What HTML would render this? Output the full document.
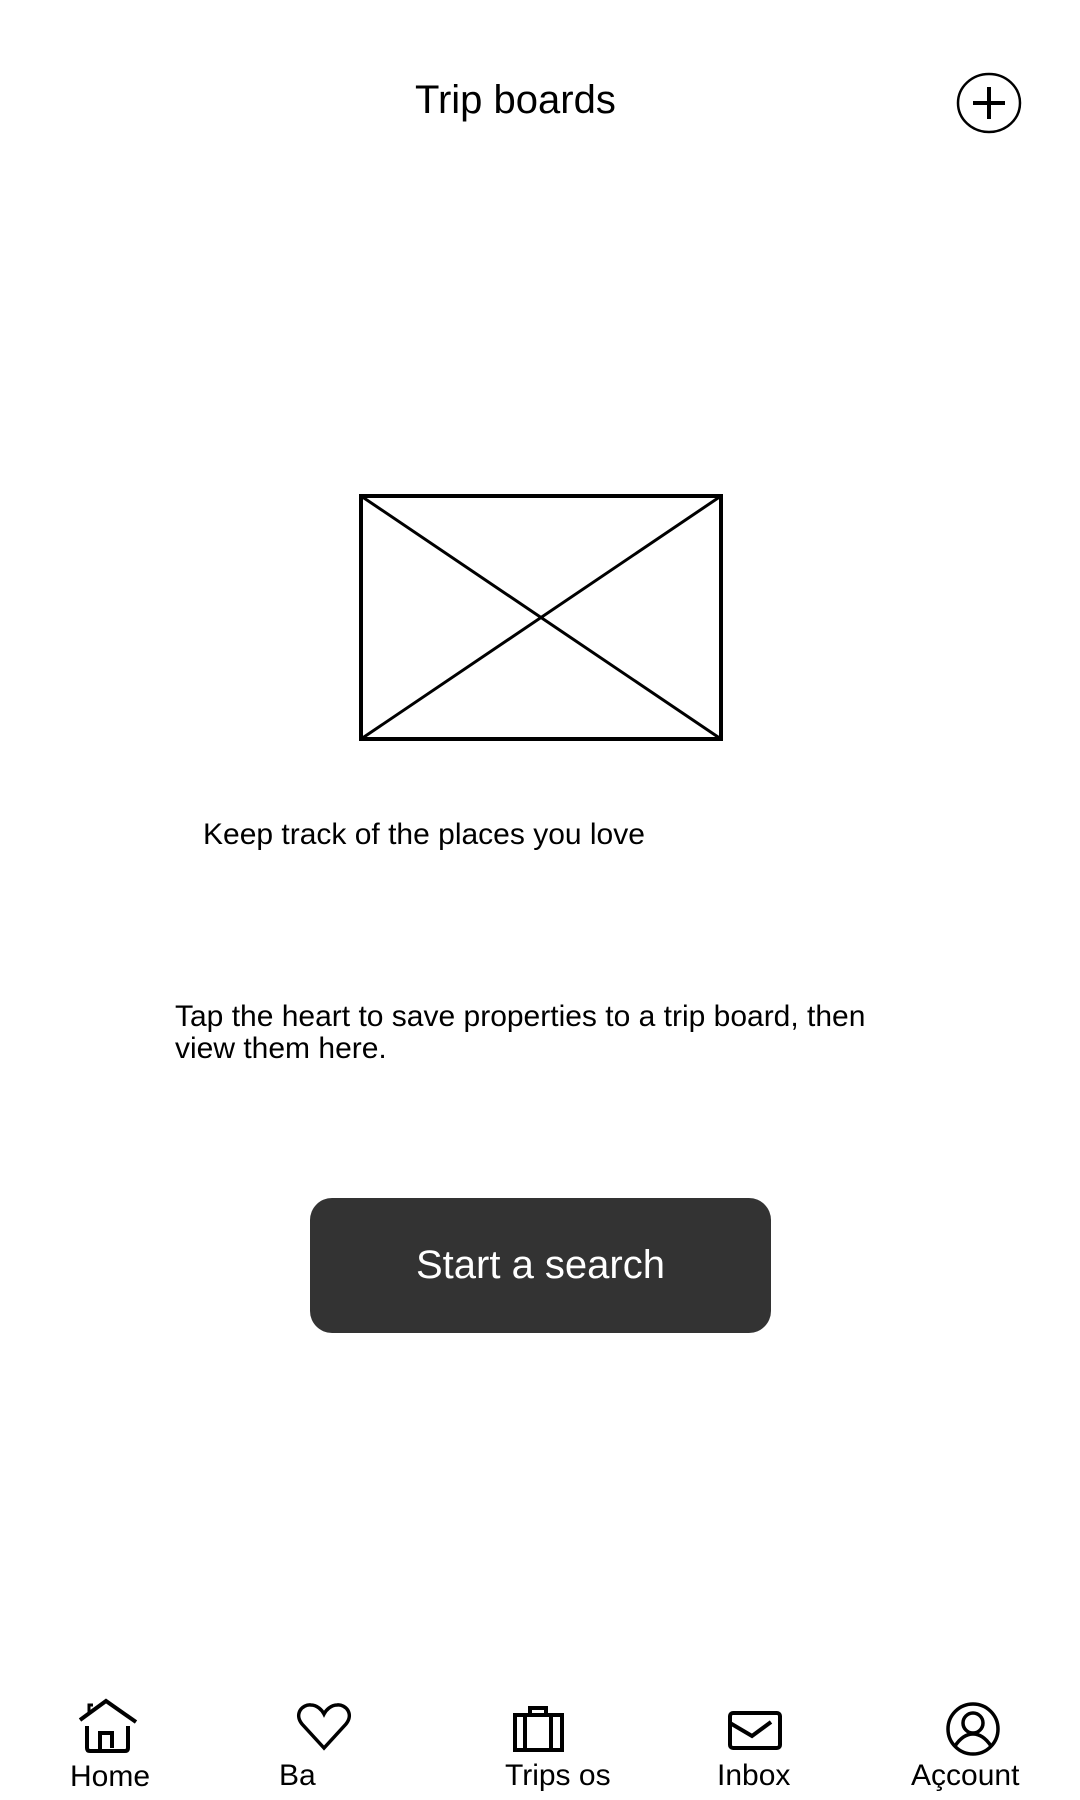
<!DOCTYPE html>
<html><head><meta charset="utf-8"><style>
html,body{margin:0;padding:0;background:#fff;}
body{width:1080px;height:1800px;position:relative;overflow:hidden;font-family:"Liberation Sans",sans-serif;color:#000;}
.t{position:absolute;white-space:nowrap;line-height:1;}
svg{position:absolute;}
</style></head><body>
<div class="t" style="left:415px;top:80px;font-size:40px;">Trip boards</div>
<svg style="left:955px;top:71px" width="68" height="64" viewBox="0 0 68 64"><ellipse cx="34" cy="32" rx="31" ry="29" fill="none" stroke="#000" stroke-width="2.5"/><path d="M34 16V48M18 32H50" stroke="#000" stroke-width="4"/></svg>
<svg style="left:357px;top:492px" width="368" height="251" viewBox="0 0 368 251"><rect x="4" y="4" width="360" height="243" fill="none" stroke="#000" stroke-width="4"/><path d="M4 4L364 247M364 4L4 247" stroke="#000" stroke-width="3"/></svg>
<div class="t" style="left:203px;top:820px;font-size:30px;">Keep track of the places you love</div>
<div class="t" style="left:175px;top:1001px;font-size:30px;line-height:32px;">Tap the heart to save properties to a trip board, then<br>view them here.</div>
<div style="position:absolute;left:310px;top:1198px;width:461px;height:135px;background:#333;border-radius:22px;color:#fff;font-size:40px;display:flex;align-items:center;justify-content:center;">Start a search</div>
<svg style="left:76px;top:1698px" width="64" height="58" viewBox="0 0 64 58"><path d="M4 22L30 3L60 24" fill="none" stroke="#000" stroke-width="4"/><path d="M13 16V7H17" fill="none" stroke="#000" stroke-width="3"/><path d="M11 28V50Q11 53 14 53H49Q52 53 52 50V28" fill="none" stroke="#000" stroke-width="4"/><path d="M24 53V35H36V50" fill="none" stroke="#000" stroke-width="4"/></svg>
<svg style="left:296px;top:1702px" width="56" height="50" viewBox="0 0 56 50"><path d="M28 46L6 22C-2 12 6 2 15 3C21 3 26 8 28 12C30 8 35 3 41 3C50 2 58 12 50 22Z" fill="none" stroke="#000" stroke-width="3.5"/></svg>
<svg style="left:511px;top:1705px" width="56" height="50" viewBox="0 0 56 50"><path d="M4 10H51V45H4Z" fill="none" stroke="#000" stroke-width="4"/><path d="M19 10V3H35V10M14 10V45M40 10V45" fill="none" stroke="#000" stroke-width="4"/></svg>
<svg style="left:727px;top:1709px" width="56" height="42" viewBox="0 0 56 42"><rect x="3" y="4" width="50" height="35" rx="3" fill="none" stroke="#000" stroke-width="4"/><path d="M3 14L25 27L44 13" fill="none" stroke="#000" stroke-width="4"/></svg>
<svg style="left:945px;top:1701px" width="56" height="56" viewBox="0 0 56 56"><circle cx="28" cy="28" r="25" fill="none" stroke="#000" stroke-width="3.5"/><circle cx="28" cy="22" r="10" fill="none" stroke="#000" stroke-width="3.5"/><path d="M10 45Q18 33 28 33Q38 33 46 45" fill="none" stroke="#000" stroke-width="3.5"/></svg>
<div class="t" style="left:70px;top:1762px;font-size:30px;">Home</div>
<div class="t" style="left:279px;top:1761px;font-size:30px;">Ba</div>
<div class="t" style="left:505px;top:1761px;font-size:30px;">Trips os</div>
<div class="t" style="left:717px;top:1761px;font-size:30px;">Inbox</div>
<div class="t" style="left:911px;top:1761px;font-size:30px;">Açcount</div>
</body></html>
